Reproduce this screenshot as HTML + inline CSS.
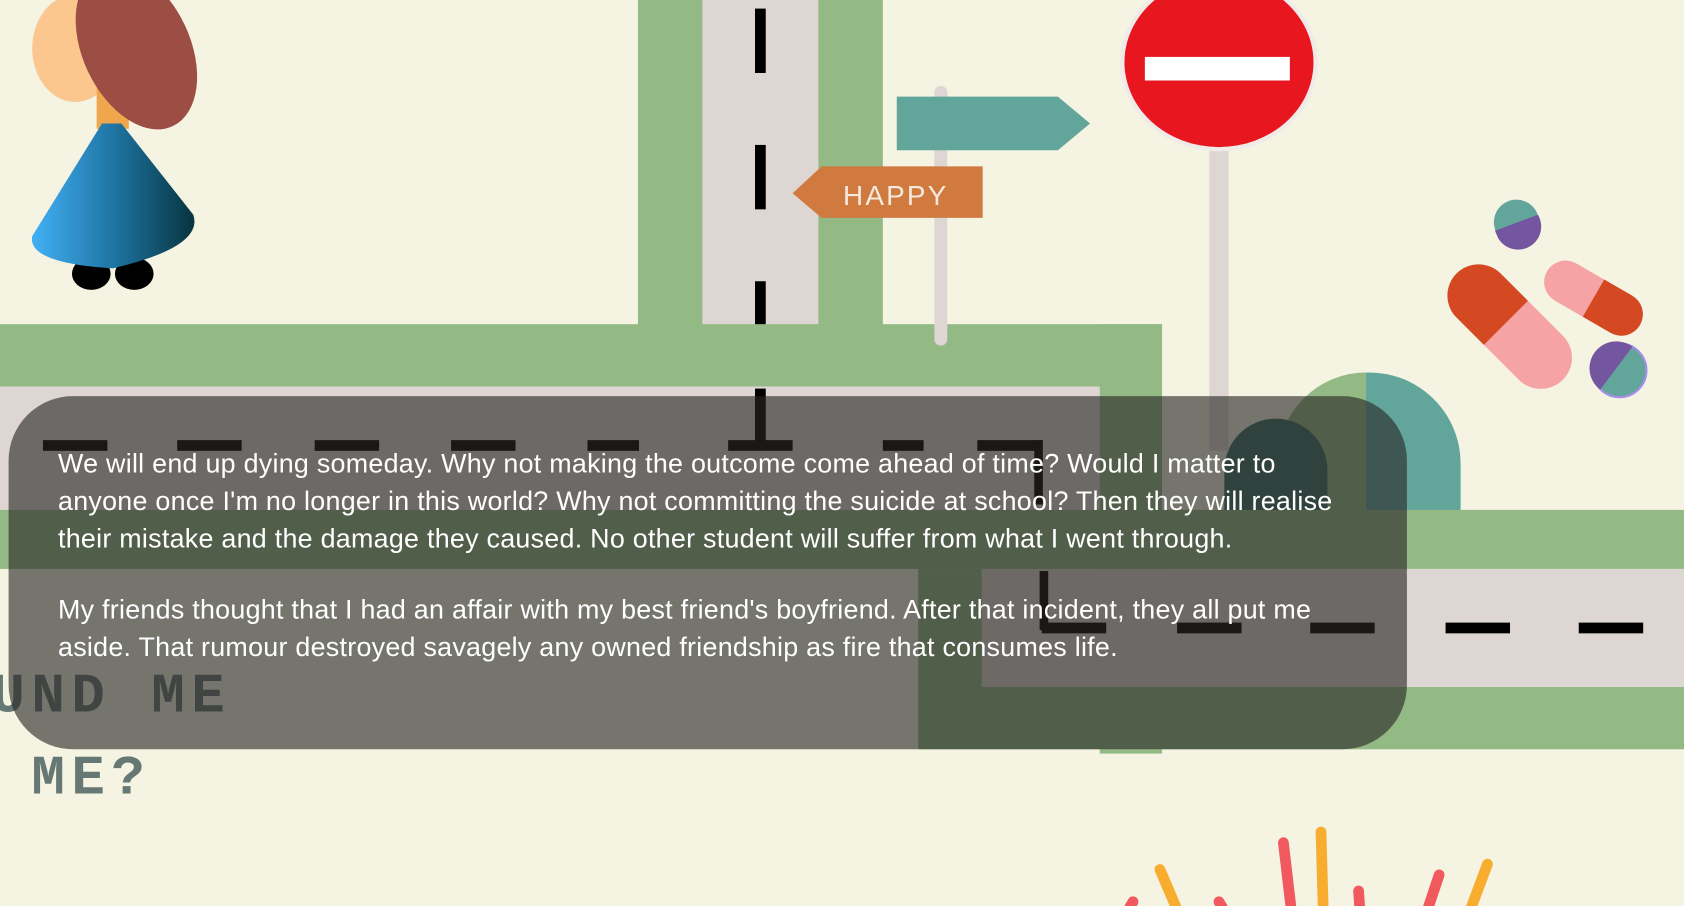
<!DOCTYPE html>
<html><head><style>
html,body{margin:0;padding:0;overflow:hidden;background:#f5f3e1;}
#w{position:relative;width:1568px;height:844px;transform:scale(1.07398,1.07346);transform-origin:0 0;background:#f5f3e1;overflow:hidden;font-family:"Liberation Sans",sans-serif;}
.a{position:absolute;}
.dash{position:absolute;background:#000;height:10px;width:60px;}
</style></head><body><div id="w">
<div class="a" style="left:594px;top:0;width:228px;height:360px;background:#93b985"></div>
<div class="a" style="left:654px;top:0;width:108px;height:380px;background:#ddd6d3"></div>
<div class="a" style="left:0;top:302px;width:1082px;height:60px;background:#93b985"></div>
<div class="a" style="left:0;top:360px;width:1024px;height:115px;background:#ddd6d3"></div>
<div class="a" style="left:1024px;top:302px;width:58px;height:400px;background:#93b985"></div>
<div class="a" style="left:1190px;top:347px;width:170px;height:140px;border-radius:85px 85px 0 0;background:#62a59b"></div>
<div class="a" style="left:1190px;top:347px;width:82px;height:140px;border-radius:82px 0 0 0;background:#93b985"></div>
<div class="a" style="left:1140px;top:390px;width:96px;height:100px;border-radius:48px 48px 0 0;background:#3d7068"></div>
<div class="a" style="left:0;top:475px;width:1568px;height:55px;background:#93b985"></div>
<div class="a" style="left:855px;top:530px;width:713px;height:168px;background:#93b985"></div>
<div class="a" style="left:914px;top:530px;width:654px;height:110px;background:#ddd6d3"></div>
<div class="a" style="left:703px;top:8px;width:10px;height:60px;background:#000"></div>
<div class="a" style="left:703px;top:135px;width:10px;height:60px;background:#000"></div>
<div class="a" style="left:703px;top:262px;width:10px;height:40px;background:#000"></div>
<div class="a" style="left:703px;top:362px;width:10px;height:50px;background:#000"></div>
<div class="a" style="left:963px;top:410px;width:8px;height:60px;background:#000"></div>
<div class="a" style="left:968px;top:532px;width:8px;height:55px;background:#000"></div>
<div class="dash" style="left:40px;top:410px"></div><div class="dash" style="left:165px;top:410px"></div>
<div class="dash" style="left:293px;top:410px"></div><div class="dash" style="left:420px;top:410px"></div>
<div class="dash" style="left:547px;top:410px;width:48px"></div><div class="dash" style="left:678px;top:410px"></div>
<div class="dash" style="left:822px;top:410px;width:38px"></div><div class="dash" style="left:910px;top:410px"></div>
<div class="dash" style="left:1346px;top:580px"></div><div class="dash" style="left:1470px;top:580px"></div>
<div class="dash" style="left:1220px;top:580px"></div><div class="dash" style="left:1096px;top:580px"></div><div class="dash" style="left:970px;top:580px"></div>
<div class="a" style="left:870px;top:80px;width:12px;height:242px;background:#ddd6d3;border-radius:6px"></div>
<svg class="a" style="left:735px;top:85px" width="285" height="125"><polygon points="100,5 250,5 280,30 250,55 100,55" fill="#62a59b"/><polygon points="3,95 30,70 180,70 180,118 30,118" fill="#d07a3f"/><text x="50" y="106" fill="#f5e8dc" font-size="26" font-family="Liberation Sans" letter-spacing="2">HAPPY</text></svg>
<div class="a" style="left:1126px;top:120px;width:18px;height:300px;background:#ddd6d3"></div>
<div class="a" style="left:1043px;top:-25px;width:176px;height:158px;border-radius:50%;background:#e8161f;border:4px solid #f0ebe8"></div>
<div class="a" style="left:1066px;top:53px;width:135px;height:22px;background:#fff"></div>
<svg class="a" style="left:1340px;top:180px" width="220" height="200">
<circle cx="72" cy="27" r="21" fill="#62a59b"/><path d="M52,35 L92,20 A21,21 0 0 1 55,42Z" fill="#7456a0"/>
<g transform="rotate(45 65 125)"><rect x="-5" y="95" width="140" height="58" rx="29" fill="#f6a3a6"/><path d="M24,95 H60 V153 H24 A29,29 0 0 1 24,95Z" fill="#d44922"/></g>
<g transform="rotate(30 143 95)"><rect x="95" y="77" width="100" height="40" rx="20" fill="#f6a3a6"/><path d="M145,77 H175 A20,20 0 0 1 175,117 H145Z" fill="#d44922"/></g>
<circle cx="168" cy="165" r="25" fill="#62a59b" stroke="#a58ee8" stroke-width="2"/><path d="M150,183 L180,143 A25,25 0 0 0 150,183Z" fill="#7456a0"/>
</svg>
<svg class="a" style="left:15px;top:0" width="175" height="275">
<ellipse cx="55" cy="45" rx="40" ry="50" fill="#fbc78e"/>
<rect x="75" y="80" width="30" height="40" fill="#f0a64d"/>
<ellipse cx="112" cy="45" rx="50" ry="80" fill="#9c4d44" transform="rotate(-25 112 45)"/>
<ellipse cx="70" cy="255" rx="18" ry="15" fill="#000"/><ellipse cx="110" cy="255" rx="18" ry="15" fill="#000"/>
<defs><linearGradient id="g"><stop offset="0" stop-color="#42b0f5"/><stop offset="0.5" stop-color="#1f75a3"/><stop offset="1" stop-color="#07343f"/></linearGradient></defs>
<path d="M80,115 L98,115 L165,200 Q175,230 90,250 Q10,245 15,220Z" fill="url(#g)"/>
</svg>
<div class="a" style="left:-8px;top:612px;font-family:'Liberation Mono',monospace;font-weight:bold;font-size:52px;color:#2a4545;letter-spacing:6px;line-height:76px;opacity:.7">UND ME<br>&nbsp;ME?</div>
<svg class="a" style="left:1040px;top:760px" width="360" height="90"><g stroke-linecap="round" stroke-width="10" fill="none"><path d="M40,50 L55,85" stroke="#f9ad2e"/><path d="M155,25 L162,85" stroke="#f05a5f"/><path d="M190,15 L192,85" stroke="#f9ad2e"/><path d="M225,70 L226,85" stroke="#f05a5f"/><path d="M300,55 L290,85" stroke="#f05a5f"/><path d="M345,45 L330,85" stroke="#f9ad2e"/><path d="M15,80 L12,85" stroke="#f05a5f"/><path d="M95,80 L98,85" stroke="#f05a5f"/></g></svg>
<div class="a" style="left:8px;top:369px;width:1302px;height:329px;border-radius:60px;background:rgba(40,38,37,0.62)"></div>
<div class="a" style="left:54px;top:415px;white-space:nowrap;color:#fff;font-size:25px;line-height:35px;letter-spacing:0.25px;">
<p style="margin:0 0 31px">We will end up dying someday. Why not making the outcome come ahead of time? Would I matter to<br>anyone once I'm no longer in this world? Why not committing the suicide at school? Then they will realise<br>their mistake and the damage they caused. No other student will suffer from what I went through.</p>
<p style="margin:0">My friends thought that I had an affair with my best friend's boyfriend. After that incident, they all put me<br>aside. That rumour destroyed savagely any owned friendship as fire that consumes life.</p>
</div>
</div></body></html>
